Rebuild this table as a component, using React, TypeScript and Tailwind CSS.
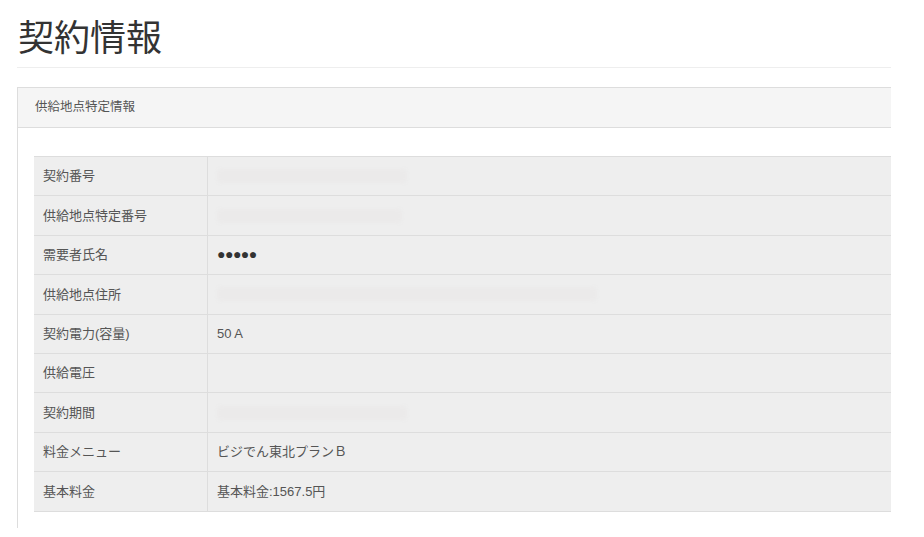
const rows: { label: string; value?: string; blur?: number }[] = [
  { label: '契約番号', blur: 190 },
  { label: '供給地点特定番号', blur: 185 },
  { label: '需要者氏名', value: '●●●●●' },
  { label: '供給地点住所', blur: 380 },
  { label: '契約電力(容量)', value: '50 A' },
  { label: '供給電圧' },
  { label: '契約期間', blur: 190 },
  { label: '料金メニュー', value: 'ビジでん東北プランＢ' },
  { label: '基本料金', value: '基本料金:1567.5円' },
];

export default function App() {
  return (
    <div
      className="w-[924px] h-[537px] overflow-hidden bg-white text-[#555]"
      style={{ fontFamily: '"Liberation Sans", "Noto Sans CJK JP", sans-serif' }}
    >
      <div className="w-[874px] ml-[17px] pt-[16px]">
        <h1 className="pl-[1px] text-[36px] leading-[46px] font-normal text-[#333]">契約情報</h1>
        <div className="mt-[5px] border-t border-[#eeeeee]" />

        {/* Panel */}
        <div className="mt-[19px] border-l border-t border-[#dddddd]">
          <div className="h-[40px] bg-[#f5f5f5] border-b border-[#dddddd] flex items-center pl-[17px] text-[12.5px] text-[#555]">
            供給地点特定情報
          </div>
          <div className="pl-[16px] pt-[28px] pb-[16px]">
            <div className="border-t border-[#dddddd] bg-[#eeeeee]">
              {rows.map((r) => (
                <div key={r.label} className="flex h-[39.4px] border-b border-[#dddddd] text-[13px]">
                  <div className="w-[174px] shrink-0 flex items-center pl-[9px] border-r border-[#dddddd] text-[#555]">
                    {r.label}
                  </div>
                  <div className="flex-1 flex items-center pl-[9px]">
                    {r.value && (
                      <span className={r.value.startsWith('●') ? 'text-[#333] text-[14px] tracking-[-0.5px]' : 'text-[#555]'}>
                        {r.value}
                      </span>
                    )}
                    {r.blur && (
                      <span
                        className="h-[14px] rounded-[4px] bg-[#ebeaea] blur-[1.5px]"
                        style={{ width: r.blur }}
                      />
                    )}
                  </div>
                </div>
              ))}
            </div>
          </div>
        </div>
      </div>
    </div>
  );
}
